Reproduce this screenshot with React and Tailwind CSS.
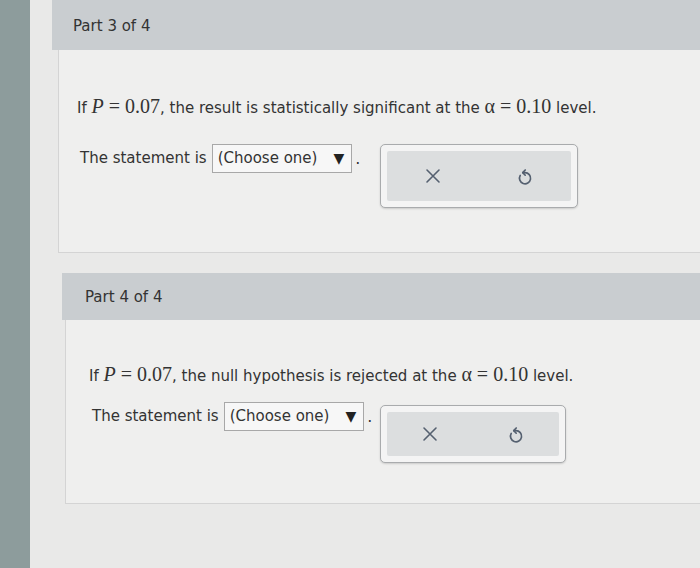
import React from "react";

const Math = ({ children }) => (
  <span className="font-['Liberation_Serif',serif] text-[20px]">{children}</span>
);

const XIcon = () => (
  <svg width="16" height="16" viewBox="0 0 16 16" fill="none" stroke="#556070" strokeWidth="1.6" strokeLinecap="round">
    <path d="M2 2 L14 14 M14 2 L2 14" />
  </svg>
);

const UndoIcon = () => (
  <svg width="18" height="20" viewBox="0 0 16 18" fill="none" stroke="#556070" strokeWidth="1.5" strokeLinecap="round" strokeLinejoin="round">
    <path d="M6 6 H8 A5 5 0 1 1 3.7 8.5" />
    <path d="M8.2 3.6 L6 6 L8.2 8.3" />
  </svg>
);

const Question = ({ text, pad, gap, bottom, box, boxTop }) => (
  <div className={`bg-[#efefee] border-l border-b border-[#d4d4d4] ${pad}`}>
    <p className="text-[15px] text-[#333] leading-6">{text}</p>
    <div className={`flex items-start ${gap} ${bottom}`}>
      <div className="flex items-center pl-[3px]">
        <span className="text-[15px] text-[#333] mr-[5px]">The statement is</span>
        <div className="flex items-center border border-[#a8a8a8] bg-[#f7f7f7] h-[29px] px-[5px] text-[15px] text-[#333]">
          (Choose one)
          <span className="ml-[16px] mr-[2px] text-[14px] text-[#222]">▼</span>
        </div>
        <span className="ml-[3px] text-[#333]">.</span>
      </div>
      <div className={`${boxTop} rounded-[5px] border border-[#a9abad] bg-[#f4f4f4] p-[6px] shadow-[0_1px_2px_rgba(0,0,0,0.15)]`}>
        <div className={`flex items-center justify-around ${box} rounded-[2px] bg-[#dcdedf]`}>
          <XIcon />
          <UndoIcon />
        </div>
      </div>
    </div>
  </div>
);

export default function App() {
  return (
    <div className="w-[700px] h-[568px] overflow-hidden flex bg-[#e9e9e8] font-['DejaVu_Sans',Verdana,sans-serif]">
      <div className="w-[30px] shrink-0 bg-[#8d9c9c]" />
      <div className="flex-1 pl-[22px]">
        <div>
          <div className="h-[50px] bg-[#c9cdd0] flex items-center pl-[21px] pt-[2px] text-[15px] text-[#333]">Part 3 of 4</div>
          <div className="ml-[6px]">
            <Question
              pad="pl-[18px] pt-[44px]"
              gap="mt-[24px]"
              bottom="pb-[44px]"
              box="w-[184px] h-[50px]"
              boxTop="ml-[20px]"
              text={
                <>
                  If <Math><i>P</i> = 0.07</Math>, the result is statistically significant at the <Math>α = 0.10</Math> level.
                </>
              }
            />
          </div>
        </div>
        <div className="mt-[20px] ml-[10px]">
          <div className="h-[47px] bg-[#c9cdd0] flex items-center pl-[23px] pt-[2px] text-[15px] text-[#333]">Part 4 of 4</div>
          <div className="ml-[3px]">
            <Question
              pad="pl-[23px] pt-[42px]"
              gap="mt-[14px]"
              bottom="pb-[40px]"
              box="w-[172px] h-[44px]"
              boxTop="ml-[8px] mt-[3px]"
              text={
                <>
                  If <Math><i>P</i> = 0.07</Math>, the null hypothesis is rejected at the <Math>α = 0.10</Math> level.
                </>
              }
            />
          </div>
        </div>
      </div>
    </div>
  );
}
